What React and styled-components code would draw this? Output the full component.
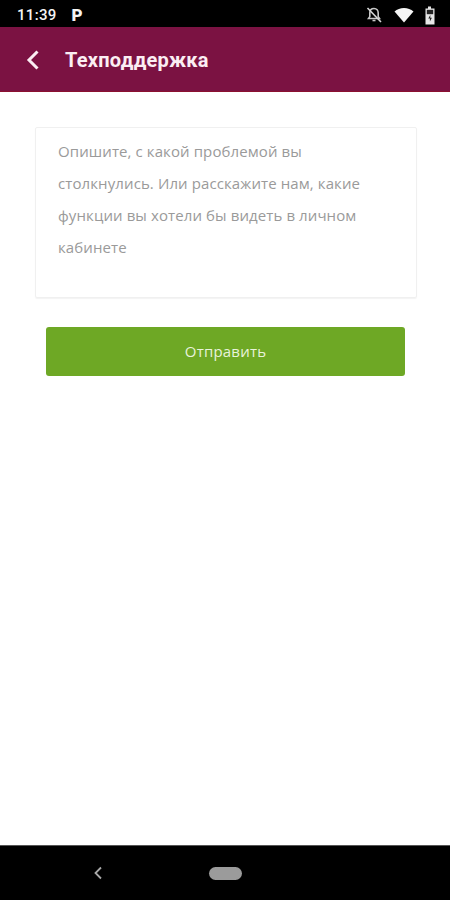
import React from "react";
import styled, { createGlobalStyle } from "styled-components";

const Global = createGlobalStyle`
  html, body { margin: 0; padding: 0; background: #fff; }
  #root { width: 450px; height: 900px; }
  * { box-sizing: border-box; }
`;

const Screen = styled.div`
  width: 450px;
  height: 900px;
  overflow: hidden;
  display: flex;
  flex-direction: column;
  background: #fff;
  font-family: "Roboto", "Liberation Sans", sans-serif;
`;

const StatusBar = styled.div`
  height: 27px;
  flex: none;
  background: #000;
  display: flex;
  align-items: center;
  padding: 3px 15px 0 17px;
  color: #f4f4f4;
`;

const Time = styled.span`
  font-size: 15px;
  font-weight: 500;
  letter-spacing: 0.3px;
`;

const ParkIcon = styled.span`
  font-size: 17px;
  font-weight: 900;
  line-height: 1;
  margin-left: 15px;
`;

const StatusIcons = styled.div`
  margin-left: auto;
  display: flex;
  align-items: center;
  gap: 11px;
`;

const Header = styled.header`
  height: 65px;
  flex: none;
  background: #7b1242;
  border-bottom: 1px solid #8c1030;
  display: flex;
  align-items: center;
  padding: 2px 0 0 26px;
  gap: 25px;
`;

const Title = styled.h1`
  margin: 0;
  color: #fbeef3;
  font-size: 20px;
  font-weight: 700;
  line-height: 1;
  letter-spacing: 0.25px;
`;

const Content = styled.main`
  flex: 1;
  padding: 35px 33px 0 35px;
  display: flex;
  flex-direction: column;
`;

const MessageBox = styled.div`
  height: 171px;
  border: 1px solid #f0f0f0;
  border-radius: 2px;
  box-shadow: 0 1px 1px rgba(0, 0, 0, 0.05);
  padding: 7px 22px 0;
  font-family: "Open Sans", "Noto Sans", sans-serif;
  font-size: 15px;
  line-height: 32px;
  letter-spacing: 0.1px;
  color: #9a9a9a;
`;

const SendButton = styled.button`
  margin: 29px 12px 0 11px;
  height: 49px;
  border: none;
  border-radius: 3px;
  background: #6ea825;
  color: #e8f3da;
  font-family: "Open Sans", "Noto Sans", sans-serif;
  font-size: 15px;
  letter-spacing: 0.2px;
  padding: 0 0 2px;
`;

const NavBar = styled.footer`
  height: 55px;
  flex: none;
  background: #000;
  border-top: 1px solid #555;
  display: flex;
  align-items: center;
  padding: 0 0 0 93px;
  gap: 106px;
`;

const HomePill = styled.div`
  width: 33px;
  height: 13px;
  border-radius: 7px;
  background: #9b9b9b;
`;

const Mute = () => (
  <svg width="18" height="18" viewBox="0 0 18 18" fill="none">
    <path d="M9 2.5c-2.7 0-4.2 2-4.2 4.5v3.6L3.5 12.5h11L13.2 10.6V7C13.2 4.5 11.7 2.5 9 2.5z" stroke="#c8c8c8" strokeWidth="1.6" />
    <path d="M7.5 14.5h3" stroke="#c8c8c8" strokeWidth="1.6" />
    <path d="M2.5 2l13.5 14" stroke="#d8d8d8" strokeWidth="1.6" />
  </svg>
);

const Wifi = () => (
  <svg width="20" height="16" viewBox="0 0 20 16">
    <path d="M0.5 4.5C3 2.2 6.3 1 10 1s7 1.2 9.5 3.5L10 15.5z" fill="#f6f6f6" />
  </svg>
);

const Battery = () => (
  <svg width="10" height="19" viewBox="0 0 10 19">
    <path d="M3 0.5h3v2h3.5v16H.5v-16H3z" fill="#e6e6e6" />
    <path d="M1.8 3.8h6.4v4.4H1.8z" fill="#222" />
    <path d="M5.3 9L3.3 12.4h1.6v3l2-3.6H5.3z" fill="#222" />
  </svg>
);

const Back = () => (
  <svg width="14" height="22" viewBox="0 0 14 22" fill="none">
    <path d="M11.5 2.5L3 11l8.5 8.5" stroke="#fbeef3" strokeWidth="3" />
  </svg>
);

const NavBack = () => (
  <svg width="10" height="14" viewBox="0 0 10 14" fill="none">
    <path d="M8 1.5L2.5 7 8 12.5" stroke="#a8a8a8" strokeWidth="1.8" />
  </svg>
);

export default function App() {
  return (
    <Screen>
      <Global />
      <StatusBar>
        <Time>11:39</Time>
        <ParkIcon>P</ParkIcon>
        <StatusIcons>
          <Mute />
          <Wifi />
          <Battery />
        </StatusIcons>
      </StatusBar>
      <Header>
        <Back />
        <Title>Техподдержка</Title>
      </Header>
      <Content>
        <MessageBox>
          Опишите, с какой проблемой вы
          <br />
          столкнулись. Или расскажите нам, какие
          <br />
          функции вы хотели бы видеть в личном
          <br />
          кабинете
        </MessageBox>
        <SendButton>Отправить</SendButton>
      </Content>
      <NavBar>
        <NavBack />
        <HomePill />
      </NavBar>
    </Screen>
  );
}
